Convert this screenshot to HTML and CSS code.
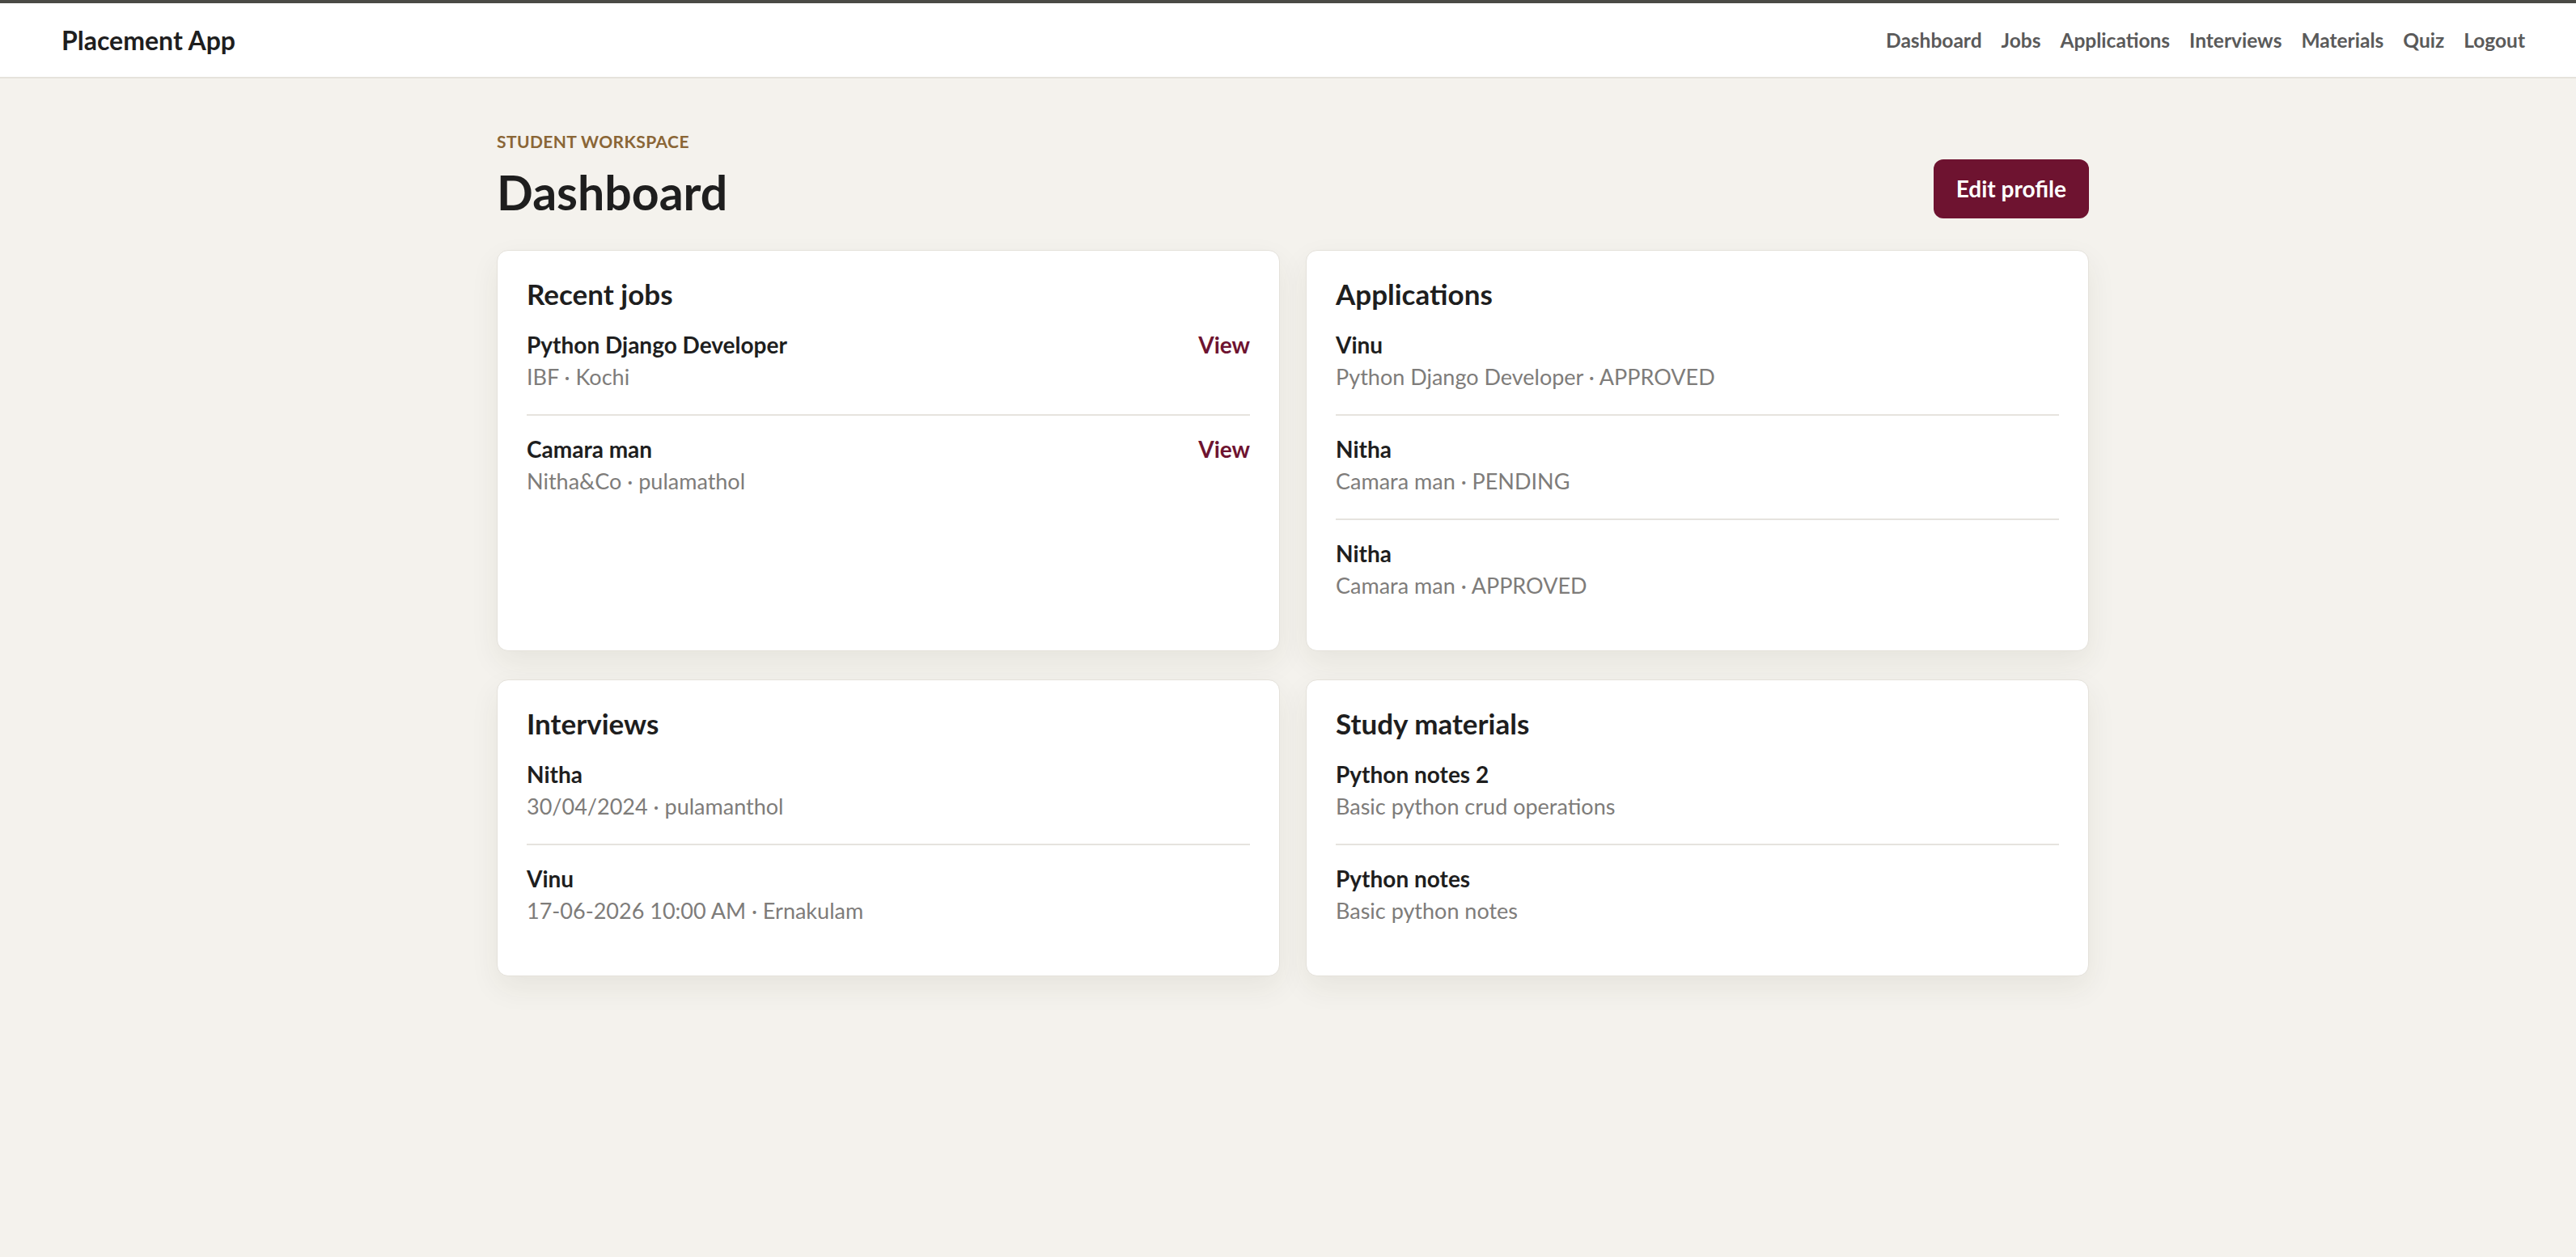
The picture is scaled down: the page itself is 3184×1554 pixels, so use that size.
FILE: index.html
```html
<!doctype html>
<html lang="en">
  <head>
    <meta charset="UTF-8">
    <meta content="width=device-width, initial-scale=1.0" name="viewport">
    <title>Dashboard | Placement App</title>
    <link rel="stylesheet" href="styles.css">
  </head>
  <body>
    <header class="topbar">
      <a class="brand" href="#">Placement App</a>
      <nav class="nav">
        <a href="#">Dashboard</a>
        <a href="#">Jobs</a>
        <a href="#">Applications</a>
        <a href="#">Interviews</a>
        <a href="#">Materials</a>
        <a href="#">Quiz</a>
        <a href="#">Logout</a>
      </nav>
    </header>
    <main class="page">
      <div class="page-head">
        <div>
          <p class="eyebrow">Student workspace</p>
          <h1>Dashboard</h1>
        </div>
        <a class="btn" href="#">Edit profile</a>
      </div>

      <div class="grid">
        <section class="card">
          <h2>Recent jobs</h2>
          <ul class="list">
            <li>
              <div>
                <p class="item-title">Python Django Developer</p>
                <p class="item-meta">IBF · Kochi</p>
              </div>
              <a class="view" href="#">View</a>
            </li>
            <li>
              <div>
                <p class="item-title">Camara man</p>
                <p class="item-meta">Nitha&amp;Co · pulamathol</p>
              </div>
              <a class="view" href="#">View</a>
            </li>
          </ul>
        </section>

        <section class="card">
          <h2>Applications</h2>
          <ul class="list">
            <li>
              <div>
                <p class="item-title">Vinu</p>
                <p class="item-meta">Python Django Developer · APPROVED</p>
              </div>
            </li>
            <li>
              <div>
                <p class="item-title">Nitha</p>
                <p class="item-meta">Camara man · PENDING</p>
              </div>
            </li>
            <li>
              <div>
                <p class="item-title">Nitha</p>
                <p class="item-meta">Camara man · APPROVED</p>
              </div>
            </li>
          </ul>
        </section>

        <section class="card">
          <h2>Interviews</h2>
          <ul class="list">
            <li>
              <div>
                <p class="item-title">Nitha</p>
                <p class="item-meta">30/04/2024 · pulamanthol</p>
              </div>
            </li>
            <li>
              <div>
                <p class="item-title">Vinu</p>
                <p class="item-meta">17-06-2026 10:00 AM · Ernakulam</p>
              </div>
            </li>
          </ul>
        </section>

        <section class="card">
          <h2>Study materials</h2>
          <ul class="list">
            <li>
              <div>
                <p class="item-title">Python notes 2</p>
                <p class="item-meta">Basic python crud operations</p>
              </div>
            </li>
            <li>
              <div>
                <p class="item-title">Python notes</p>
                <p class="item-meta">Basic python notes</p>
              </div>
            </li>
          </ul>
        </section>
      </div>
    </main>
  </body>
</html>
```

FILE: styles.css
```css
html {
  -webkit-text-size-adjust: 100%;
}
body {
  background-color: #f4f2ed;
  border-top: 4px solid #4a4a45;
  color: #1e1e1e;
  font-family: Lato, "Open Sans", sans-serif;
  margin: 0
}
a {
  text-decoration: none
}
p {
  margin: 0
}

/* top navigation */
.topbar {
  align-items: center;
  background-color: #fff;
  border-bottom: 2px solid #e6e3dc;
  display: flex;
  height: 91px;
  justify-content: space-between;
  padding: 0 63px 0 76px
}
.brand {
  color: #1e1e1e;
  font-size: 32px;
  font-weight: 700
}
.nav {
  display: flex;
  gap: 24px
}
.nav a {
  color: #5a5a5a;
  font-size: 24.5px;
  font-weight: 700
}

/* page */
.page {
  margin: 0 auto;
  max-width: 1968px;
  padding: 66px 0 80px 12px
}
.page-head {
  align-items: flex-end;
  display: flex;
  justify-content: space-between;
  margin-bottom: 36px
}
.eyebrow {
  color: #8a6636;
  font-size: 21px;
  font-weight: 700;
  letter-spacing: 0.4px;
  line-height: 24px;
  margin-bottom: 16px;
  text-transform: uppercase
}
h1 {
  font-size: 59px;
  font-weight: 700;
  line-height: 70px;
  margin: 0
}
.btn {
  background-color: #6e1330;
  border-radius: 12px;
  color: #fff;
  font-size: 28px;
  font-weight: 700;
  line-height: 73px;
  margin-bottom: 3px;
  padding: 0 28px
}

/* cards */
.grid {
  display: grid;
  gap: 35px 32px;
  grid-template-columns: 1fr 1fr
}
.card {
  background-color: #fff;
  border: 1px solid #e4e1da;
  border-radius: 14px;
  box-shadow: 0 14px 36px rgba(60, 50, 30, 0.07);
  padding: 31px 36px 34px
}
.card h2 {
  font-size: 35px;
  font-weight: 700;
  line-height: 44px;
  margin: 0 0 21px
}
.list {
  list-style: none;
  margin: 0;
  padding: 0
}
.list li {
  align-items: flex-start;
  border-top: 2px solid #e6e3de;
  display: flex;
  justify-content: space-between;
  padding: 21px 0 26px
}
.list li:first-child {
  border-top: 0;
  padding-top: 0
}
.item-title {
  font-size: 28px;
  font-weight: 700;
  line-height: 40px
}
.item-meta {
  color: #7e7c7a;
  font-size: 27px;
  line-height: 40px
}
.view {
  color: #6e1330;
  font-size: 28px;
  font-weight: 700;
  line-height: 40px
}
```
